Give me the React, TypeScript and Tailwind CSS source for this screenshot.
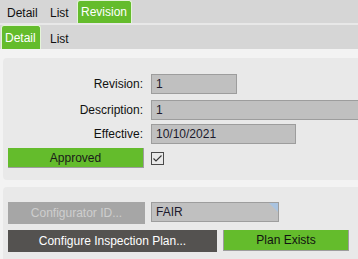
import React from "react";

function Field({ label, value, width, top }: { label: string; value: string; width: string; top: string }) {
  return (
    <div className={`flex items-center ${top}`}>
      <div className="w-[140px] shrink-0 text-right">{label}</div>
      <div
        className={`ml-[8px] h-[20px] ${width} shrink-0 bg-[#c0c0c0] border border-[#9d9d9d] pl-[4px] flex items-center text-[#1c1a2c]`}
      >
        {value}
      </div>
    </div>
  );
}

export default function App() {
  return (
    <div
      className="w-[358px] h-[259px] overflow-hidden bg-[#f3f3f3] text-[12px] text-[#111]"
      style={{ fontFamily: '"Liberation Sans", Arial, sans-serif' }}
    >
      {/* outer tabs */}
      <div className="h-[23px] bg-[#d6d6d6] flex items-stretch">
        <div className="pl-[7px] pt-[4px] w-[50px]">Detail</div>
        <div className="pt-[4px] w-[27px]">List</div>
        <div className="w-[55px] bg-[#64bc2c] border border-b-0 border-[#e4f4d8] rounded-t-[3px] text-white pl-[3px] pt-[2px]">
          Revision
        </div>
      </div>
      <div className="h-[2px] bg-[#e8e8e8]" />
      {/* inner tabs */}
      <div className="h-[24px] bg-[#d6d6d6] flex items-stretch">
        <div className="ml-[1px] w-[40px] bg-[#64bc2c] border border-b-0 border-[#e4f4d8] rounded-t-[3px] text-white pl-[3px] pt-[3px]">
          Detail
        </div>
        <div className="ml-[9px] pt-[5px]">List</div>
      </div>

      <div className="pt-[9px] pl-[3px] flex flex-col gap-[7px]">
        {/* panel 1 */}
        <div className="h-[122px] w-[380px] bg-[#e9e9e9] rounded-[4px] flex flex-col">
          <Field label="Revision:" value="1" width="w-[86px]" top="mt-[16px]" />
          <Field label="Description:" value="1" width="w-[240px]" top="mt-[6px]" />
          <Field label="Effective:" value="10/10/2021" width="w-[145px]" top="mt-[4px]" />
          <div className="flex items-center mt-[4px]">
            <div className="ml-[5px] w-[136px] h-[20px] bg-[#64bc2c] border-b border-r border-[#9d9d9d] flex items-center justify-center text-[#1a1a1a]">
              Approved
            </div>
            <div className="ml-[7px] w-[13px] h-[13px] border border-[#4a4a4a] flex items-center justify-center">
              <svg width="11" height="11" viewBox="0 0 11 11">
                <path d="M1.5 5.5 L4 8 L9.5 2.5" fill="none" stroke="#333" strokeWidth="1.1" />
              </svg>
            </div>
          </div>
        </div>

        {/* panel 2 */}
        <div className="h-[80px] w-[380px] bg-[#e9e9e9] rounded-[4px] flex flex-col pl-[5px]">
          <div className="flex mt-[15px]">
            <div className="w-[137px] h-[22px] bg-[#a6a6a6] text-[#cecece] flex items-center justify-center">
              Configurator ID...
            </div>
            <div className="relative ml-[6px] w-[128px] h-[20px] bg-[#c0c0c0] border border-[#9d9d9d] pl-[4px] flex items-center text-[#1c1a2c]">
              FAIR
              <div className="absolute top-0 right-0 w-0 h-0 border-t-[9px] border-l-[9px] border-t-[#a9c3e0] border-l-transparent" />
            </div>
          </div>
          <div className="flex mt-[6px]">
            <div className="w-[209px] h-[22px] bg-[#545250] text-white flex items-center justify-center">
              Configure Inspection Plan...
            </div>
            <div className="ml-[6px] w-[126px] h-[21px] bg-[#64bc2c] border-b border-r border-l border-[#9d9d9d] text-[#111] flex items-center justify-center">
              Plan Exists
            </div>
          </div>
        </div>
      </div>
    </div>
  );
}
